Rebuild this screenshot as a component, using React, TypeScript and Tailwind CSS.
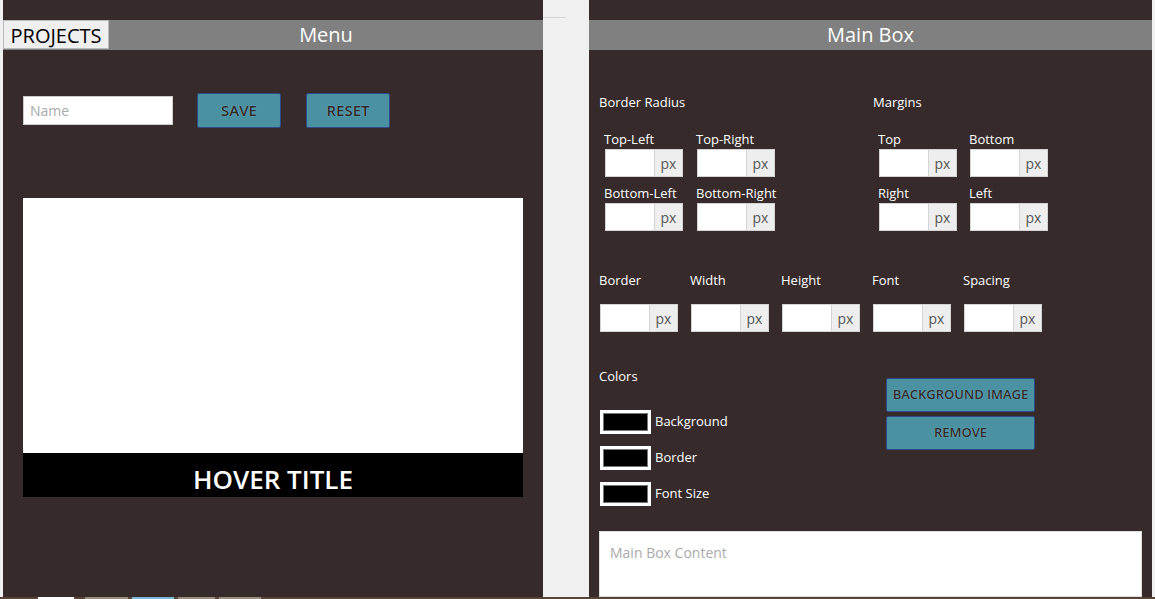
import type { ReactNode } from "react";

const font = "font-['Open_Sans',sans-serif]";

function PxInput() {
  return (
    <div className="flex h-[28px]">
      <div className="h-full w-[50px] border border-[#d4d4d4] bg-white" />
      <div className="flex h-full w-[28px] items-center justify-center border border-l-0 border-[#d4d4d4] bg-[#eeeeee] text-[14px] text-[#555]">
        px
      </div>
    </div>
  );
}

function Field({ label }: { label: string }) {
  return (
    <div className="flex flex-col">
      <span className="h-[18px] text-[13px] leading-[18px] text-white">{label}</span>
      <div className="mt-[1px] pl-[1px]">
        <PxInput />
      </div>
    </div>
  );
}

function TealButton({ children, className }: { children: ReactNode; className: string }) {
  return (
    <button
      className={`flex items-center justify-center rounded-[2px] border border-[#2f4a8a] bg-[#4a91a2] font-semibold text-[#2a2a2a] [text-shadow:0_0_1px_#a9d0da] ${className}`}
    >
      {children}
    </button>
  );
}

function Swatch({ label }: { label: string }) {
  return (
    <div className="flex h-[24px] items-center gap-[4px]">
      <div className="flex h-[24px] w-[51px] items-center justify-center bg-white p-[3px]">
        <div className="h-full w-full border border-[#777] bg-black" />
      </div>
      <span className="text-[13px] text-white">{label}</span>
    </div>
  );
}

function MenuPanel() {
  return (
    <div className="flex h-full w-[540px] flex-col bg-[#362a2a] pt-[20px]">
      <div className="flex h-[30px] bg-[#808080]">
        <button className="h-[29px] w-[106px] border border-[#bbb] bg-[#efefef] pt-[3px] text-[20px] leading-none text-black">
          PROJECTS
        </button>
        <div className="flex flex-1 items-center justify-center text-[20px] text-white">Menu</div>
      </div>
      <div className="mt-[43px] flex items-center pl-[20px]">
        <div className="flex h-[29px] w-[150px] items-center border border-[#ccc] bg-white pl-[6px] text-[14px] text-[#aaa]">
          Name
        </div>
        <TealButton className="ml-[24px] h-[35px] w-[84px] text-[15px]">SAVE</TealButton>
        <TealButton className="ml-[25px] h-[35px] w-[84px] text-[15px]">RESET</TealButton>
      </div>
      <div className="ml-[20px] mt-[70px] flex h-[299px] w-[500px] flex-col">
        <div className="flex-1 bg-white" />
        <div className="flex h-[44px] items-center justify-center bg-black pt-[8px] text-[26px] font-semibold text-white">
          HOVER TITLE
        </div>
      </div>
    </div>
  );
}

function MainBoxPanel() {
  return (
    <div className="flex h-full w-[563px] flex-col bg-[#362a2a] pt-[20px]">
      <div className="flex h-[30px] items-center justify-center bg-[#808080] text-[20px] text-white">Main Box</div>
      <div className="flex flex-1 flex-col pl-[10px]">
        <div className="mt-[43px] flex">
          <div className="w-[274px]">
            <div className="text-[13px] leading-[18px] text-white">Border Radius</div>
            <div className="mt-[19px] grid w-[190px] grid-cols-[92px_92px] gap-y-[7px] pl-[5px]">
              <Field label="Top-Left" />
              <Field label="Top-Right" />
              <Field label="Bottom-Left" />
              <Field label="Bottom-Right" />
            </div>
          </div>
          <div>
            <div className="text-[13px] leading-[18px] text-white">Margins</div>
            <div className="mt-[19px] grid grid-cols-[91px_91px] gap-y-[7px] pl-[5px]">
              <Field label="Top" />
              <Field label="Bottom" />
              <Field label="Right" />
              <Field label="Left" />
            </div>
          </div>
        </div>
        <div className="mt-[40px] flex">
          {["Border", "Width", "Height", "Font", "Spacing"].map((l) => (
            <div key={l} className="flex w-[91px] flex-col">
              <span className="h-[18px] text-[13px] leading-[18px] text-white">{l}</span>
              <div className="mt-[15px] pl-[1px]">
                <PxInput />
              </div>
            </div>
          ))}
        </div>
        <div className="mt-[35px] flex">
          <div className="w-[287px]">
            <div className="text-[13px] leading-[18px] text-white">Colors</div>
            <div className="mt-[25px] flex flex-col gap-[12px] pl-[1px]">
              <Swatch label="Background" />
              <Swatch label="Border" />
              <Swatch label="Font Size" />
            </div>
          </div>
          <div className="mt-[11px] flex flex-col gap-[4px]">
            <TealButton className="h-[34px] w-[149px] text-[13px]">BACKGROUND IMAGE</TealButton>
            <TealButton className="h-[34px] w-[149px] text-[13px]">REMOVE</TealButton>
          </div>
        </div>
        <div className="mt-[25px] w-[543px] flex-1 border border-[#ddd] bg-white px-[10px] pt-[10px] text-[14px] text-[#aaa]">
          Main Box Content
        </div>
      </div>
    </div>
  );
}

export default function App() {
  return (
    <div className={`flex h-[599px] w-[1155px] flex-col overflow-hidden bg-[#f0f0f0] ${font}`}>
      <div className="flex h-[597px]">
        <div className="ml-[3px]">
          <MenuPanel />
        </div>
        <div className="w-[46px] pt-[17px]">
          <div className="h-[1px] w-[23px] bg-[#d6d6d6]" />
        </div>
        <MainBoxPanel />
      </div>
      <div className="flex h-[2px] bg-[#5a4535]">
        <div className="ml-[38px] w-[36px] bg-white" />
        <div className="ml-[11px] w-[43px] bg-[#9a8e7e]" />
        <div className="ml-[4px] w-[42px] bg-[#7ab8d8]" />
        <div className="ml-[4px] w-[37px] bg-[#9a8e7e]" />
        <div className="ml-[4px] w-[42px] bg-[#9a8e7e]" />
      </div>
    </div>
  );
}
